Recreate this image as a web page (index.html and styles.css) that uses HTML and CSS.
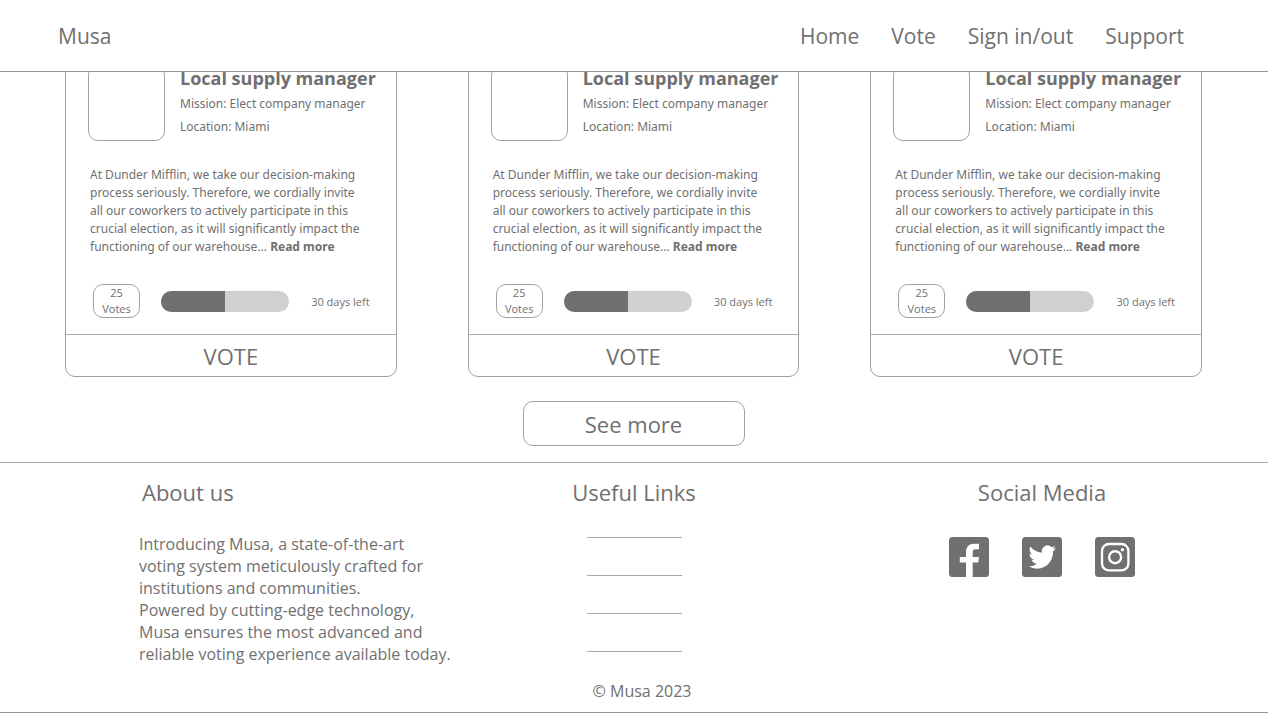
FILE: index.html
```html
<!DOCTYPE html>
<html lang="en">
<head>
<meta charset="utf-8">
<meta name="viewport" content="width=device-width, initial-scale=1">
<title>Musa</title>
<link rel="stylesheet" href="styles.css">
</head>
<body>
<header class="site-header">
  <a class="brand" href="#">Musa</a>
  <nav class="nav">
    <a href="#">Home</a>
    <a href="#">Vote</a>
    <a href="#">Sign in/out</a>
    <a href="#">Support</a>
  </nav>
</header>
<main class="content">
  <div class="cards">
    <article class="card">
      <div class="card-body">
        <div class="card-head">
          <div class="thumb"></div>
          <div class="meta">
            <h2>Local supply manager</h2>
            <p>Mission: Elect company manager</p>
            <p>Location: Miami</p>
          </div>
        </div>
        <p class="desc">At Dunder Mifflin, we take our decision-making<br>process seriously. Therefore, we cordially invite<br>all our coworkers to actively participate in this<br>crucial election, as it will significantly impact the<br>functioning of our warehouse... <a href="#">Read more</a></p>
        <div class="stats">
          <div class="votes">25<br>Votes</div>
          <div class="bar"><div class="bar-fill"></div></div>
          <span class="days">30 days left</span>
        </div>
      </div>
      <button class="vote" type="button">VOTE</button>
    </article>
    <article class="card">
      <div class="card-body">
        <div class="card-head">
          <div class="thumb"></div>
          <div class="meta">
            <h2>Local supply manager</h2>
            <p>Mission: Elect company manager</p>
            <p>Location: Miami</p>
          </div>
        </div>
        <p class="desc">At Dunder Mifflin, we take our decision-making<br>process seriously. Therefore, we cordially invite<br>all our coworkers to actively participate in this<br>crucial election, as it will significantly impact the<br>functioning of our warehouse... <a href="#">Read more</a></p>
        <div class="stats">
          <div class="votes">25<br>Votes</div>
          <div class="bar"><div class="bar-fill"></div></div>
          <span class="days">30 days left</span>
        </div>
      </div>
      <button class="vote" type="button">VOTE</button>
    </article>
    <article class="card">
      <div class="card-body">
        <div class="card-head">
          <div class="thumb"></div>
          <div class="meta">
            <h2>Local supply manager</h2>
            <p>Mission: Elect company manager</p>
            <p>Location: Miami</p>
          </div>
        </div>
        <p class="desc">At Dunder Mifflin, we take our decision-making<br>process seriously. Therefore, we cordially invite<br>all our coworkers to actively participate in this<br>crucial election, as it will significantly impact the<br>functioning of our warehouse... <a href="#">Read more</a></p>
        <div class="stats">
          <div class="votes">25<br>Votes</div>
          <div class="bar"><div class="bar-fill"></div></div>
          <span class="days">30 days left</span>
        </div>
      </div>
      <button class="vote" type="button">VOTE</button>
    </article>
  </div>
  <button class="see-more" type="button">See more</button>
</main>
<footer class="site-footer">
  <div class="columns">
    <section class="about">
      <h3>About us</h3>
      <p>Introducing Musa, a state-of-the-art<br>voting system meticulously crafted for<br>institutions and communities.<br>Powered by cutting-edge technology,<br>Musa ensures the most advanced and<br>reliable voting experience available today.</p>
    </section>
    <section class="links">
      <h3>Useful Links</h3>
      <ul>
        <li></li>
        <li></li>
        <li></li>
        <li></li>
      </ul>
    </section>
    <section class="social">
      <h3>Social Media</h3>
      <div class="icons">
        <a href="#" aria-label="Facebook"><svg viewBox="0 0 40 40"><rect width="40" height="40" rx="3.500" fill="#707070"/><path fill="#fff" d="M17 40V25.500h-6.200V20H17v-4.500C17 10 20 6.800 25 6.800h5v5.400h-3.300c-2.200 0-3 1-3 3V20H30l-.700 5.500h-5.600V40z"/></svg></a>
        <a href="#" aria-label="Twitter"><svg viewBox="0 0 40 40"><rect width="40" height="40" rx="3.500" fill="#707070"/><path fill="#fff" transform="translate(6.500 5.800) scale(1.140 1.190)" d="M23.950 4.570a10 10 0 0 1-2.820.780 4.960 4.960 0 0 0 2.160-2.730c-.950.560-2 .960-3.130 1.190a4.920 4.920 0 0 0-8.380 4.480C7.690 8.100 4.070 6.130 1.640 3.160a4.820 4.820 0 0 0-.670 2.480c0 1.710.870 3.210 2.190 4.100a4.900 4.900 0 0 1-2.230-.620v.060a4.920 4.920 0 0 0 3.950 4.830 5 5 0 0 1-2.210.080 4.940 4.940 0 0 0 4.600 3.420A9.870 9.870 0 0 1 0 19.540a14 14 0 0 0 7.550 2.210c9.050 0 14-7.500 14-13.980 0-.210 0-.420-.020-.630a9.940 9.940 0 0 0 2.460-2.550z"/></svg></a>
        <a href="#" aria-label="Instagram"><svg viewBox="0 0 40 40"><rect width="40" height="40" rx="3.500" fill="#707070"/><rect x="7" y="7" width="26.400" height="26.400" rx="7" fill="none" stroke="#fff" stroke-width="2.300"/><circle cx="20.100" cy="20.200" r="6" fill="none" stroke="#fff" stroke-width="2.400"/><circle cx="27.400" cy="12.700" r="1.700" fill="#fff"/></svg></a>
      </div>
    </section>
  </div>
  <p class="copyright">© Musa 2023</p>
</footer>
</body>
</html>
```
FILE: styles.css
```css
* { box-sizing: border-box; }
body {
  margin: 0;
  background: #fff;
  color: #707070;
  font-family: "Segoe UI", "Open Sans", "Noto Sans", sans-serif;
}
h2, h3, p, ul { margin: 0; padding: 0; }
a { color: inherit; text-decoration: none; }
button { font: inherit; color: inherit; cursor: pointer; }

.site-header {
  position: fixed;
  inset: 0 0 auto;
  z-index: 1;
  display: flex;
  justify-content: space-between;
  align-items: center;
  height: 72px;
  padding: 0 84px 0 58px;
  background: #fff;
  border-bottom: 1px solid #959595;
  font-size: 21px;
}
.nav { display: flex; gap: 32px; }

.content { padding: 45px 66px 16px 65px; }
.cards {
  display: grid;
  grid-template-columns: repeat(3, minmax(0, 1fr));
  gap: 71px;
}
.card {
  border: 1px solid #a0a0a0;
  border-radius: 10px;
}
.card-body { padding: 19px 22px 16px; }
.card-head { display: flex; gap: 15px; }
.thumb {
  flex: none;
  width: 77px;
  height: 76px;
  border: 1px solid #a0a0a0;
  border-radius: 10px;
}
.meta,
.desc {
  font-family: "Segoe UI", "Noto Sans", "Open Sans", sans-serif;
  font-size: 12px;
  white-space: nowrap;
}
.meta { line-height: 23px; }
.meta h2 {
  font-family: "Segoe UI", "Open Sans", "Noto Sans", sans-serif;
  font-size: 18px;
  line-height: 27px;
}
.desc {
  margin: 25px 0 0 2px;
  line-height: 18px;
}
.desc a { font-weight: 700; }
.stats {
  display: flex;
  align-items: center;
  margin-top: 28px;
  padding: 0 4px 0 5px;
  font-size: 11px;
}
.votes {
  width: 47px;
  border: 1px solid #a0a0a0;
  border-radius: 10px;
  line-height: 16px;
  text-align: center;
}
.bar {
  width: 128px;
  height: 21px;
  margin: 0 auto 0 21px;
  border-radius: 11px;
  background: #d0d0d0;
  overflow: hidden;
}
.bar-fill { width: 50%; height: 100%; background: #707070; }
.vote {
  display: block;
  width: 100%;
  height: 42px;
  padding: 0;
  border: 0;
  border-top: 1px solid #b0b0b0;
  background: none;
  font-size: 22px;
}
.see-more {
  display: block;
  width: 222px;
  height: 45px;
  margin: 24px auto 0;
  padding: 0;
  border: 1px solid #a0a0a0;
  border-radius: 10px;
  background: none;
  font-size: 22px;
}

.site-footer {
  border-top: 1px solid #a8a8a8;
  border-bottom: 1px solid #959595;
  padding: 13px 133px 10px;
}
.columns {
  display: grid;
  grid-template-columns: 1fr auto 1fr;
}
h3 { font-size: 22px; line-height: 32px; font-weight: 400; }
.about { padding-left: 6px; }
.about h3 { padding-left: 3px; }
.about p { margin-top: 25px; font-size: 16px; line-height: 22px; white-space: nowrap; }
.links ul {
  display: grid;
  gap: 37px;
  width: 95px;
  margin: 29px auto 0;
  list-style: none;
}
.links li { border-top: 1px solid #a8a8a8; }
.social { justify-self: end; }
.social h3 { text-align: center; }
.icons { display: flex; gap: 33px; margin-top: 29px; }
.icons svg { display: block; width: 40px; height: 40px; }
.copyright {
  margin-top: 15px;
  padding-left: 16px;
  font-size: 16px;
  line-height: 22px;
  text-align: center;
}
```
